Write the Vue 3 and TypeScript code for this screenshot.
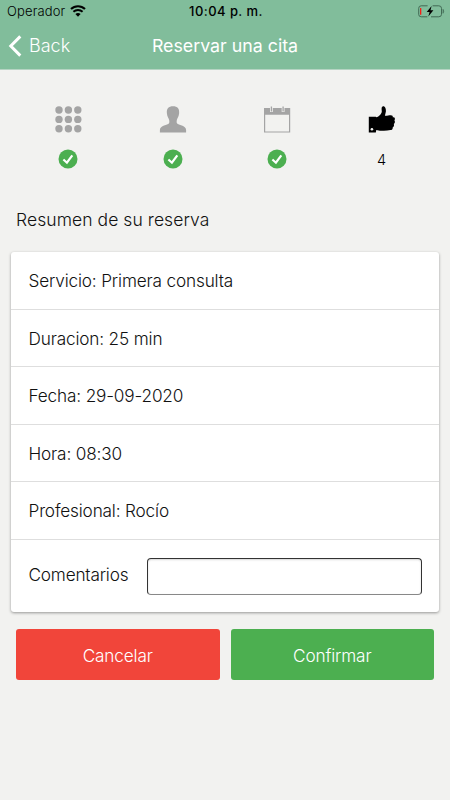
<script setup lang="ts">
interface Row {
  label: string
  value: string
}

const rows: Row[] = [
  { label: 'Servicio', value: 'Primera consulta' },
  { label: 'Duracion', value: '25 min' },
  { label: 'Fecha', value: '29-09-2020' },
  { label: 'Hora', value: '08:30' },
  { label: 'Profesional', value: 'Rocío' },
]

const steps = ['service', 'person', 'date', 'confirm'] as const
const dots = [5, 14.4, 23.8]
</script>

<template>
  <div class="screen">
    <header class="header">
      <div class="status">
        <div class="carrier">
          <span>Operador</span>
          <svg class="wifi" width="16" height="12" viewBox="0 0 16 12">
            <path d="M1 4.1A10 10 0 0 1 15 4.1" fill="none" stroke="#000" stroke-width="2.1" />
            <path d="M3.4 6.8A6.6 6.6 0 0 1 12.6 6.8" fill="none" stroke="#000" stroke-width="1.9" />
            <path d="M5.4 9Q8 6.9 10.6 9L8 11.7Z" fill="#000" />
          </svg>
        </div>
        <span class="time">10:04 p. m.</span>
        <svg class="battery" width="27" height="13" viewBox="0 0 27 13">
          <path d="M9.6 .8H3.2Q.7.8.7 3.3V9.3Q.7 11.8 3.2 11.8H9.4M14.6 .8H20.8Q23.5.8 23.5 3.3V9.3Q23.5 11.8 20.8 11.8H13" fill="none" stroke="#426a55" stroke-width="1" />
          <path d="M25 4.3Q26.4 6.3 25 8.3Z" fill="#426a55" stroke="#426a55" stroke-width=".6" />
          <rect x="2" y="3" width="1.3" height="6.7" rx=".3" fill="#f81c16" />
          <path d="M13.6 .9L8.7 7H11.6L10.3 11.6L15.4 5.2H12.5Z" fill="#000" />
        </svg>
      </div>
      <nav class="nav">
        <button class="back" type="button">
          <svg width="14" height="22" viewBox="0 0 14 22">
            <path d="M12.3 1.4L2.8 11L12.3 20.6" fill="none" stroke="#fff" stroke-width="3" />
          </svg>
          <span>Back</span>
        </button>
        <h1 class="title">Reservar una cita</h1>
      </nav>
    </header>

    <section class="steps">
      <div v-for="step in steps" :key="step" class="step">
        <svg class="icon" width="28" height="28" viewBox="0 0 28 28">
          <g v-if="step === 'service'" fill="#a4a4a4">
            <template v-for="y in dots" :key="y">
              <circle v-for="x in dots" :key="x" :cx="x" :cy="y" r="3.7" />
            </template>
          </g>
          <path v-else-if="step === 'person'" fill="#a4a4a4" d="M14 1.3C18.5 1.3 20.6 3.8 20.1 8.4C19.7 11.8 18.4 13 17.9 14.8C17.5 16.7 17.5 18 18.4 18.8C20.5 20.2 27.1 20.8 27.1 25V27.4H.9V25C.9 20.8 7.5 20.2 9.6 18.8C10.5 18 10.5 16.7 10.1 14.8C9.6 13 8.3 11.8 7.9 8.4C7.4 3.8 9.5 1.3 14 1.3Z" />
          <g v-else-if="step === 'date'">
            <path fill="#a4a4a4" fill-rule="evenodd" d="M1 3H27.2V27.6H1ZM2.2 9.8H26V26.4H2.2Z" />
            <path d="M8.4 1V7M20.1 1V7" stroke="#f2f2f0" stroke-width="2.8" />
            <path d="M8.4 1.4V6.4M20.1 1.4V6.4" stroke="#a4a4a4" stroke-width="1.3" />
          </g>
          <g v-else>
            <path fill="#000" d="M.8 11.7H7.8L8.4 12.3C11 11.6 13.6 8.9 13.8 6.5C13.5 3.2 13.3 1.4 15.2 1.2C17.3 1.2 18.1 3.9 17.9 6.4L16.9 10.7C18.6 11.1 20.2 10.3 22.8 10.3C24.4 10.3 25 11.2 24.8 12.3C27 11.6 27.5 14.2 26.4 15.2C27.3 16.7 26.9 18.2 25.8 19.1C26.3 20.7 26 21.8 24.7 22.5C24.9 24.5 23.7 24.9 22.5 25.1C17.7 26.1 12.5 25.9 8.3 24.9L7.8 27.4H.8Z" />
            <circle cx="3.9" cy="24.3" r="1.3" fill="#f2f2f0" />
          </g>
        </svg>
        <svg v-if="step !== 'confirm'" class="check" width="20" height="20" viewBox="0 0 20 20">
          <circle cx="10" cy="10" r="9.5" fill="#4caf50" />
          <path d="M5.4 10.5L8.9 13.7L14.3 6.3" fill="none" stroke="#fff" stroke-width="2.2" />
        </svg>
        <span v-else class="number">4</span>
      </div>
    </section>

    <h2 class="heading">Resumen de su reserva</h2>

    <main class="card">
      <div v-for="row in rows" :key="row.label" class="row">{{ row.label }}: {{ row.value }}</div>
      <label class="comments">
        <span>Comentarios</span>
        <input class="field" type="text" />
      </label>
    </main>

    <div class="actions">
      <button class="button cancel" type="button">Cancelar</button>
      <button class="button confirm" type="button">Confirmar</button>
    </div>
  </div>
</template>

<style>
body {
  margin: 0;
  background: #f2f2f0;
}
</style>

<style scoped>
.screen {
  box-sizing: border-box;
  width: 450px;
  height: 800px;
  overflow: hidden;
  background: #f2f2f0;
  color: #111;
  font-family: Inter, "Liberation Sans", sans-serif;
  font-size: 17.2px;
  font-weight: 300;
}
button {
  font-family: inherit;
  border: 0;
  padding: 0;
}
.header {
  height: 69px;
  background: #81bd9b;
  border-bottom: 1px solid #b6d4c3;
  box-sizing: content-box;
}
.status {
  display: grid;
  grid-template-columns: 1fr auto 1fr;
  align-items: center;
  height: 22px;
  padding: 0 5px 0 7px;
  color: #000;
  font-size: 13px;
}
.carrier {
  display: flex;
  align-items: center;
  gap: 5px;
  font-weight: 300;
  letter-spacing: 0.15px;
}
.time {
  font-weight: 500;
  letter-spacing: 0.45px;
}
.battery {
  justify-self: end;
}
.nav {
  display: grid;
  grid-template-columns: 1fr auto 1fr;
  align-items: center;
  height: 47px;
  padding: 0 8px;
  color: #fff;
}
.back {
  display: flex;
  align-items: center;
  gap: 7px;
  background: none;
  color: inherit;
  font-size: 18px;
  font-weight: 300;
}
.title {
  margin: 0;
  font-size: 17.8px;
  font-weight: 400;
}
.steps {
  display: grid;
  grid-template-columns: repeat(4, 104.4px);
  justify-content: center;
  padding-top: 35px;
  height: 99px;
}
.step {
  display: flex;
  flex-direction: column;
  align-items: center;
}
.check {
  margin-top: 16px;
}
.number {
  margin-top: 17px;
  font-size: 14.5px;
  line-height: 20px;
  font-weight: 300;
  color: #000;
}
.heading {
  margin: 0;
  padding: 4px 16px 0;
  height: 44px;
  line-height: 24px;
  font-size: 17.5px;
  font-weight: 300;
  letter-spacing: 0.07px;
}
.card {
  margin: 0 11px;
  background: #fff;
  border-radius: 3px;
  box-shadow: 0 1px 3px rgba(0, 0, 0, 0.38);
}
.row {
  box-sizing: border-box;
  height: 57.6px;
  padding-left: 17.5px;
  border-bottom: 1px solid #dedede;
  line-height: 58px;
  letter-spacing: -0.16px;
}
.comments {
  display: flex;
  align-items: center;
  justify-content: space-between;
  box-sizing: border-box;
  height: 72.5px;
  padding: 0 17px 0 17.5px;
}
.comments span {
  padding-bottom: 4px;
  letter-spacing: -0.18px;
}
.field {
  box-sizing: border-box;
  width: 275px;
  height: 37px;
  border: 1px solid #333;
  border-bottom-color: #888;
  border-radius: 4px;
  background: #fff;
  box-shadow: inset 0 1px 2px rgba(0, 0, 0, 0.16);
}
.actions {
  display: grid;
  grid-template-columns: 1fr 1fr;
  gap: 11px;
  padding: 17px 16px 0;
}
.button {
  height: 51px;
  padding-top: 2px;
  border-radius: 3px;
  color: #fff;
  font-size: 17.2px;
  font-weight: 300;
  letter-spacing: -0.15px;
}
.cancel {
  background: #f1453a;
}
.confirm {
  background: #4caf50;
}
</style>
